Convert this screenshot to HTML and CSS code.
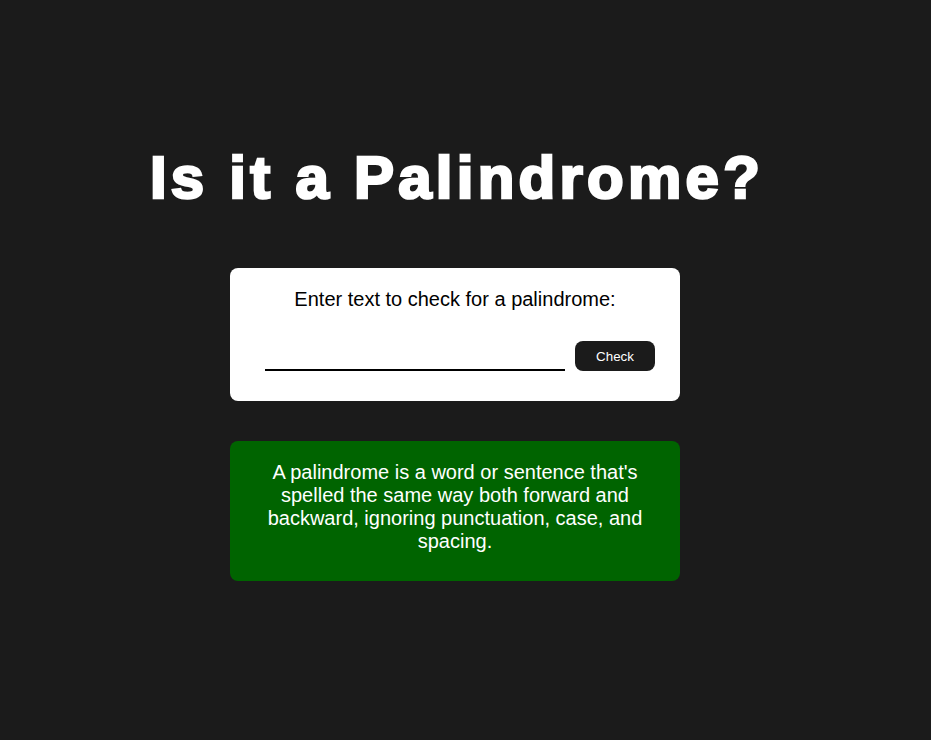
FILE: index.html
```html
<!DOCTYPE html>
<html lang="en">
<head>
<meta charset="UTF-8">
<title>Palindrome Checker</title>
<link rel="stylesheet" href="styles.css">
</head>
<body>
<main class="page">
  <h1 class="title">Is it a Palindrome?</h1>
  <section class="checker">
    <label class="checker-label" for="text-input">Enter text to check for a palindrome:</label>
    <div class="checker-row">
      <input class="checker-input" id="text-input" type="text">
      <button class="checker-btn" type="button">Check</button>
    </div>
  </section>
  <section class="info">
    <p class="info-text">A palindrome is a word or sentence that's spelled the same way both forward and backward, ignoring punctuation, case, and spacing.</p>
  </section>
</main>
</body>
</html>
```
FILE: styles.css
```css
* { box-sizing: border-box; }
html, body { margin: 0; padding: 0; }
body {
  background: #1b1b1b;
  font-family: "Liberation Sans", Arial, sans-serif;
  color: #fff;
}
.page {
  min-height: 100vh;
  display: flex;
  flex-direction: column;
  align-items: center;
  justify-content: center;
  padding: 0 21px 17px 0;
}
.title {
  margin: 0 0 56px;
  padding-left: 4px;
  font-size: 60px;
  font-weight: 700;
  line-height: 69px;
  letter-spacing: 4.25px;
  -webkit-text-stroke: 2.6px #fff;
  color: #fff;
}
.checker {
  width: 450px;
  background: #fff;
  border-radius: 8px;
  padding: 20px 30px 30px;
  display: flex;
  flex-direction: column;
  align-items: center;
}
.checker-label {
  color: #000;
  font-size: 20px;
  line-height: 23px;
}
.checker-row {
  display: flex;
  align-items: flex-end;
  gap: 10px;
  margin-top: 30px;
  margin-left: 10px;
}
.checker-input {
  width: 300px;
  height: 30px;
  border: none;
  border-bottom: 2px solid #000;
  outline: none;
  background: transparent;
  font-size: 18px;
  font-family: inherit;
  padding: 0;
}
.checker-btn {
  width: 80px;
  height: 30px;
  border: none;
  border-radius: 8px;
  background: #1b1b1b;
  color: #fff;
  font-family: "Liberation Sans", Arial, sans-serif;
  font-size: 13.33px;
  padding: 1px 0 0;
  cursor: pointer;
}
.info {
  width: 450px;
  margin-top: 40px;
  background: #006400;
  border-radius: 8px;
  padding: 20px 30px 28px;
}
.info-text {
  margin: 0;
  text-align: center;
  font-size: 20px;
  line-height: 23px;
  color: #fff;
}
```
